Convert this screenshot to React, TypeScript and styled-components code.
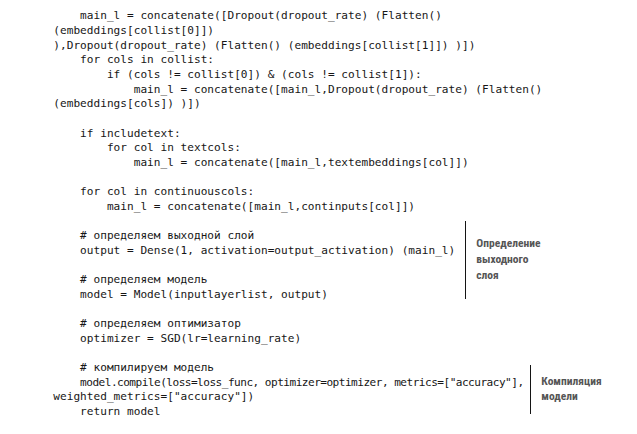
import React from "react";
import styled, { createGlobalStyle } from "styled-components";

const GlobalStyle = createGlobalStyle`
  html, body {
    margin: 0;
    padding: 0;
    background: #ffffff;
  }
  body {
    width: 637px;
    height: 434px;
    overflow: hidden;
  }
`;

const Page = styled.div`
  width: 637px;
  height: 434px;
  background: #ffffff;
  box-sizing: border-box;
  padding: 9.3px 0 0 53.3px;
  overflow: hidden;
`;

const CodeBlock = styled.div`
  display: flex;
  flex-direction: column;
  font-family: "DejaVu Sans Mono", "Liberation Mono", monospace;
  font-size: 11.1px;
  color: #161616;
`;

const Line = styled.div`
  height: 14.67px;
  line-height: 14.67px;
  white-space: pre;
  letter-spacing: 0.02px;
`;

const Tight = styled.span`
  letter-spacing: -0.52px;
`;

const Group = styled.div<{ $codeWidth: number }>`
  display: grid;
  grid-template-columns: ${(p) => p.$codeWidth}px auto;
  align-items: start;
`;

const Lines = styled.div`
  display: flex;
  flex-direction: column;
`;

const Note = styled.div<{ $top: number; $height: number }>`
  margin-top: ${(p) => p.$top}px;
  height: ${(p) => p.$height}px;
  border-left: 1.4px solid #141414;
  padding-left: 10px;
  display: flex;
  flex-direction: column;
  justify-content: center;
  font-family: "Liberation Sans Narrow", "Roboto Condensed", "Liberation Sans", sans-serif;
  font-weight: 700;
  font-size: 11.5px;
  line-height: 15.6px;
  color: #555555;
`;

type L = { t: string; tight?: boolean };

const head: L[] = [
  { t: "    main_l = concatenate([Dropout(dropout_rate) (Flatten()" },
  { t: "(embeddings[collist[0]])" },
  { t: "),Dropout(dropout_rate) (Flatten() (embeddings[collist[1]]) )])" },
  { t: "    for cols in collist:" },
  { t: "        if (cols != collist[0]) & (cols != collist[1]):" },
  { t: "            main_l = concatenate([main_l,Dropout(dropout_rate) (Flatten()" },
  { t: "(embeddings[cols]) )])" },
  { t: "" },
  { t: "    if includetext:" },
  { t: "        for col in textcols:" },
  { t: "            main_l = concatenate([main_l,textembeddings[col]])" },
  { t: "" },
  { t: "    for col in continuouscols:" },
  { t: "        main_l = concatenate([main_l,continputs[col]])" },
];

const outputGroup: L[] = [
  { t: "" },
  { t: "    # определяем выходной слой" },
  { t: "    output = Dense(1, activation=output_activation) (main_l)" },
  { t: "" },
  { t: "    # определяем модель" },
  { t: "    model = Model(inputlayerlist, output)" },
];

const middle: L[] = [
  { t: "" },
  { t: "    # определяем оптимизатор" },
  { t: "    optimizer = SGD(lr=learning_rate)" },
  { t: "" },
];

const compileGroup: L[] = [
  { t: "    # компилируем модель" },
  { t: '    model.compile(loss=loss_func, optimizer=optimizer, metrics=["accuracy"],', tight: true },
  { t: 'weighted_metrics=["accuracy"])' },
  { t: "    return model" },
];

const renderLines = (lines: L[]) =>
  lines.map((l, i) => {
    if (l.tight) {
      const body = l.t.trimStart();
      const indent = l.t.slice(0, l.t.length - body.length);
      return (
        <Line key={i}>
          {indent}
          <Tight>{body}</Tight>
        </Line>
      );
    }
    return <Line key={i}>{l.t === "" ? " " : l.t}</Line>;
  });

export default function App() {
  return (
    <>
      <GlobalStyle />
      <Page>
        <CodeBlock>
          {renderLines(head)}
          <Group $codeWidth={412}>
            <Lines>{renderLines(outputGroup)}</Lines>
            <Note $top={6.3} $height={78}>
              <span>Определение</span>
              <span>выходного</span>
              <span>слоя</span>
            </Note>
          </Group>
          {renderLines(middle)}
          <Group $codeWidth={477}>
            <Lines>{renderLines(compileGroup)}</Lines>
            <Note $top={3.6} $height={49}>
              <span>Компиляция</span>
              <span>модели</span>
            </Note>
          </Group>
        </CodeBlock>
      </Page>
    </>
  );
}
